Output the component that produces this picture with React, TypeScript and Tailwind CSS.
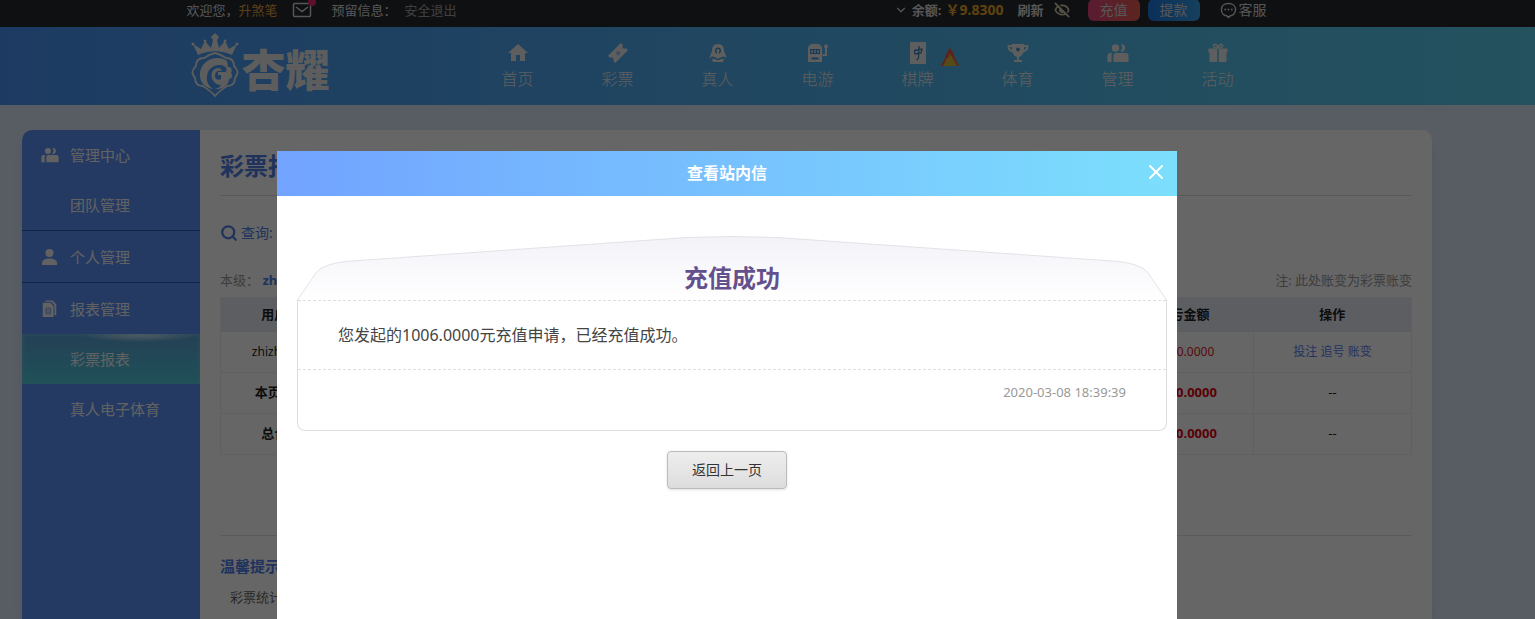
import React from 'react';
import { ChevronDown, EyeOff, Search, X } from 'lucide-react';
import { MdHome } from 'react-icons/md';

type IconProps = { className?: string };

function TicketIcon({ className }: IconProps) {
  return (
    <svg viewBox="0 0 20 20" className={className}>
      <g transform="rotate(-45 10 10)">
        <path fill="currentColor" d="M1 5h18v3a2 2 0 0 0 0 4v3H1v-3a2 2 0 0 0 0-4z" />
        <path d="m10 7 1 2 2 .3-1.500 1.400.4 2.100-1.900-1-1.900 1 .4-2.100L7 9.300l2-.3z" fill="#a8c4e8" />
      </g>
    </svg>
  );
}

function DealerIcon({ className }: IconProps) {
  return (
    <svg viewBox="0 0 20 20" className={className}>
      <path fill="currentColor" d="M10 1C5.500 1 4 4 4 7.500 4 10 1.500 12 1.500 15l3.500-1.500L10 16l5-2.500 3.500 1.500c0-3-2.500-5-2.500-7.500C16 4 14.500 1 10 1z" />
      <path fill="#4290d0" d="M10 4.500c2 0 3 1.300 3 3.200S11.800 11 10 11 7 9.600 7 7.700s1-3.200 3-3.200z" />
      <path fill="currentColor" d="M10 6a1.700 1.700 0 0 1 1 3V12H9V9a1.700 1.700 0 0 1 1-3zM4.500 15l5.500 2 5.500-2v4h-11z" />
      <path d="m3.500 14 6.500 2.500 6.500-2.500" fill="none" stroke="#4290d0" />
    </svg>
  );
}

function SlotIcon({ className }: IconProps) {
  return (
    <svg viewBox="0 0 22 20" className={className}>
      <path fill="currentColor" d="M1 6c0-3 2-5 5-5h4c3 0 5 2 5 5v13H1z" />
      <path fill="#4290d0" d="M3 6h10v5H3zM4.500 14.500h7v2h-7z" />
      <path d="M5 7v3M8 7v3M11 7v3" stroke="currentColor" strokeWidth="1.500" />
      <path d="M15.500 12H19V4" fill="none" stroke="currentColor" strokeWidth="2" />
      <circle cx="19" cy="3.500" r="2" fill="currentColor" />
    </svg>
  );
}

function MahjongIcon({ className }: IconProps) {
  return (
    <svg viewBox="0 0 20 22" className={className}>
      <path fill="currentColor" d="M2 0h16v22H2z" />
      <path d="M6.500 8.500 14 7l-1 4-6 1zM11 4l-.5 12-2 2" fill="none" stroke="#3f83b8" strokeWidth="1.300" />
    </svg>
  );
}

function FlameIcon({ className }: IconProps) {
  return (
    <svg viewBox="0 0 20 20" className={className}>
      <path fill="#e8583c" d="M10 0c1 4 4 5 4 9 2 2 2 6 5 10H1c1-4 4-5 4-10 2-2 3-5 5-9z" />
      <path fill="#d8b840" d="M10 6c0 3 3 3 3 6 2 1 2 4 4 7H3c1-3 3-4 3-7 2 0 3-3 4-6z" />
    </svg>
  );
}

function TrophyIcon({ className }: IconProps) {
  return (
    <svg viewBox="0 0 22 20" className={className}>
      <path fill="currentColor" d="M5 1h12v4c0 5-2 8-5 9v3h3v2H7v-2h3v-3c-3-1-5-4-5-9z" />
      <path d="M5 3H1.500c0 3 1.500 5 5 5.500M17 3h3.500c0 3-1.500 5-5 5.500" fill="none" stroke="currentColor" strokeWidth="2" />
      <circle cx="11" cy="6.500" r="2" fill="#429bd0" />
    </svg>
  );
}

function UsersIcon({ className }: IconProps) {
  return (
    <svg viewBox="0 0 22 20" className={className}>
      <g fill="currentColor">
        <circle cx="8.500" cy="5" r="3.700" />
        <path d="M14 1.300a3.700 3.700 0 1 1-.6 7.200 5.500 5.500 0 0 0 .6-7.200z" />
        <path d="M6.500 19v-6.500c0-1.500 1-2.500 2.500-2.500h10c1.500 0 2.500 1 2.500 2.500V19zM.5 19v-6c0-1.800.8-2.800 3-3h1.700c-.5.700-.7 1.300-.7 2.300V19z" />
      </g>
    </svg>
  );
}

function PersonIcon({ className }: IconProps) {
  return (
    <svg viewBox="0 0 18 18" className={className}>
      <circle cx="8.500" cy="5" r="4" fill="currentColor" />
      <path d="M1 17v-2c0-2.500 3-4.500 7.500-4.500S16 12.500 16 15v2z" fill="currentColor" />
    </svg>
  );
}

function GiftIcon({ className }: IconProps) {
  return (
    <svg viewBox="0 0 20 20" className={className}>
      <path fill="currentColor" d="M0.500 5.500h8.700v4H.5zM10.800 5.500h8.700v4h-8.700zM1.500 9h7.700v10H1.500zM10.800 9h7.700v10h-7.700z" />
      <path d="M10 5C7 5 5 4 5.500 2.500 6.500 0 9.500 2 10 5c.5-3 3.500-5 4.500-2.500C15 4 13 5 10 5z" fill="none" stroke="currentColor" strokeWidth="1.500" />
    </svg>
  );
}

function ReportIcon({ className }: IconProps) {
  return (
    <svg viewBox="0 0 18 20" className={className}>
      <path fill="currentColor" d="M4 .5h8l4 4.500V17h-2V6L10.500 2H4z" />
      <path fill="currentColor" d="M1 3h8.500l3.500 4v12H1z" />
      <path d="M4.500 9h5v6.500h-5zM4.500 11h5M4.500 13.500h5" fill="none" stroke="#7ea4ee" />
    </svg>
  );
}

function ChatIcon({ className }: IconProps) {
  return (
    <svg viewBox="0 0 18 18" className={className}>
      <path d="M9 1.500c4.500 0 7.500 2.800 7.500 6.500S13.500 14.500 11 14.500L9 16.500l-2-2C4 14.500 1.500 12 1.500 8S4.500 1.500 9 1.500z" fill="none" stroke="currentColor" strokeWidth="1.500" />
      <circle cx="5.500" cy="8" r="1" fill="currentColor" />
      <circle cx="9" cy="8" r="1" fill="currentColor" />
      <circle cx="12.500" cy="8" r="1" fill="currentColor" />
    </svg>
  );
}

function MailIcon({ className }: IconProps) {
  return (
    <svg viewBox="0 0 20 16" className={className}>
      <path d="M2.500 1.500h15a1 1 0 0 1 1 1v11a1 1 0 0 1-1 1h-15a1 1 0 0 1-1-1v-11a1 1 0 0 1 1-1zM4 5l6 4.500L16 5" fill="none" stroke="currentColor" strokeWidth="1.500" />
    </svg>
  );
}

function Emblem({ className }: IconProps) {
  return (
    <svg viewBox="0 0 50 66" className={className}>
      <path fill="currentColor" d="M3 11l8 5 4-8 6 7 2-8-2-3 4-4 4 4-2 3 2 8 6-7 4 8 8-5-5 11c-11-5-23-5-34 0z" />
      <circle cx="3" cy="11" r="1.500" fill="currentColor" />
      <circle cx="47" cy="11" r="1.500" fill="currentColor" />
      <circle cx="15" cy="8" r="1.500" fill="currentColor" />
      <circle cx="35" cy="8" r="1.500" fill="currentColor" />
      <path d="M25 20c5 1 8 3 11 5 6 0 8 3 8 8 4 4 5 7 1 12 0 5-3 8-8 8-4 3-8 5-12 10-4-5-8-7-12-10-5 0-8-3-8-8-4-5-3-8 1-12 0-5 2-8 8-8 3-2 6-4 11-5z" fill="none" stroke="currentColor" strokeWidth="1.800" />
      <path fill="currentColor" d="M36 27C23 21 11 29 10 40c-1 9 5 15 13 16-4-3-7-7-6-13 1-7 6-11 12-11 4 0 6 1 8 4 1-4 1-7-1-9z" />
      <path fill="currentColor" d="M22 39c3-5 9-5 10-1-5-1-7 1-7 5 0 3 3 5 6 3v-4h-3v-3h8c4 1 5 5 3 8-2 7-8 10-14 9 3-1 5-2 6-4-6 0-11-6-9-13z" />
      <path fill="currentColor" d="M37 34c4-1 6 3 4 6 2 2 1 6-2 6-2-2-4-8-2-12z" />
    </svg>
  );
}

const navItems = [
  { label: '首页', Icon: MdHome, size: 'h-6 w-6' },
  { label: '彩票', Icon: TicketIcon, size: 'h-5 w-5' },
  { label: '真人', Icon: DealerIcon, size: 'h-5 w-5' },
  { label: '电游', Icon: SlotIcon, size: 'h-5 w-[22px]' },
  { label: '棋牌', Icon: MahjongIcon, size: 'h-[22px] w-5', hot: true },
  { label: '体育', Icon: TrophyIcon, size: 'h-5 w-[22px]' },
  { label: '管理', Icon: UsersIcon, size: 'h-5 w-[22px]' },
  { label: '活动', Icon: GiftIcon, size: 'h-5 w-5' },
];

const sideGroups = [
  { label: '管理中心', Icon: UsersIcon, children: ['团队管理'] },
  { label: '个人管理', Icon: PersonIcon, children: [] },
  { label: '报表管理', Icon: ReportIcon, children: ['彩票报表', '真人电子体育'] },
];

const summaryRows = ['本页合计', '总合计'];

function TopBar() {
  return (
    <div className="h-[27px] bg-[#26282f] text-[13px] leading-5 text-[#d8d8d8]">
      <div className="mx-auto flex h-5 max-w-[1162px] items-center">
        <span>欢迎您，</span>
        <a href="#" className="text-[#e0a040]">升煞笔</a>
        <a href="#" aria-label="站内信" className="relative ml-[14px]">
          <MailIcon className="h-4 w-5" />
          <span className="absolute -top-1 -right-1 h-2 w-2 rounded-full bg-[#e8286e]" />
        </a>
        <span className="ml-5">预留信息：</span>
        <a href="#" className="ml-2 text-[#a0a0a0]">安全退出</a>
        <div className="ml-auto flex items-center pr-[82px]">
          <ChevronDown className="h-[14px] w-[14px]" />
          <span className="ml-1 font-bold">余额:</span>
          <span className="ml-1 text-sm leading-5 font-bold text-[#e8a828]">￥9.8300</span>
          <button type="button" className="ml-[14px] font-bold">刷新</button>
          <EyeOff className="ml-[10px] h-4 w-4 text-[#d8d0b0]" strokeWidth={2.5} />
          <button type="button" className="ml-[18px] h-[22px] w-[52px] rounded-md bg-linear-to-r from-[#e0457b] to-[#e85c50] text-sm leading-[22px]">充值</button>
          <button type="button" className="ml-2 h-[22px] w-[52px] rounded-md bg-linear-to-r from-[#1e78e0] to-[#38a0e8] text-sm leading-[22px]">提款</button>
          <a href="#" className="ml-5 flex items-center gap-[2px] text-sm leading-[22px]">
            <ChatIcon className="h-[17px] w-[17px]" />
            客服
          </a>
        </div>
      </div>
    </div>
  );
}

function NavBar() {
  return (
    <header className="h-[78px] bg-linear-to-r from-[#4a94f4] to-[#5acdec]">
      <div className="mx-auto flex h-full max-w-[1160px] items-center">
        <a href="#" aria-label="杏耀" className="flex w-[280px] items-center text-[#e8e8e8]">
          <Emblem className="h-[66px] w-[54px]" />
          <span className="mt-2 text-[44px] leading-[48px] font-black">杏耀</span>
        </a>
        <nav className="flex">
          {navItems.map(({ label, Icon, size, hot }) => (
            <a key={label} href="#" className="relative flex w-[100px] flex-col items-center text-[#ececec]">
              <span className="flex h-6 items-center">
                <Icon className={size} />
              </span>
              <span className="mt-[2px] text-base leading-6 font-light">{label}</span>
              {hot && <FlameIcon className="absolute top-[6px] right-2 h-5 w-5" />}
            </a>
          ))}
        </nav>
      </div>
    </header>
  );
}

function Sidebar() {
  return (
    <aside className="w-[178px] shrink-0 bg-[#5c91f7] text-[15px] leading-[50px] text-[#f4f4f4]">
      {sideGroups.map(({ label, Icon, children }) => (
        <div key={label} className="mb-px border-b border-[#3058b0] last:mb-0 last:border-b-0">
          <a href="#" className="flex items-center pl-[19px]">
            <Icon className="h-[18px] w-[18px]" />
            <span className="ml-[11px]">{label}</span>
          </a>
          {children.map(child => (
            <a
              key={child}
              href="#"
              className={`block pl-12 ${
                child === '彩票报表'
                  ? 'bg-[radial-gradient(ellipse_60px_8px_at_66%_0,#e8f4ff,transparent),linear-gradient(#5aa0d4,#4fcadc)] shadow-[inset_0_0_5px_#70c8e8]'
                  : ''
              }`}
            >
              {child}
            </a>
          ))}
        </div>
      ))}
    </aside>
  );
}

function ReportTable() {
  return (
    <table className="w-full table-fixed border border-[#eeeff3] text-center text-[13px] text-[#222]">
      <colgroup>
        <col className="w-[120px]" />
        <col />
        <col className="w-[140px]" />
        <col className="w-[158px]" />
      </colgroup>
      <thead>
        <tr className="h-[34px] bg-[#e6ebf5] font-bold">
          <th>用户名</th>
          <th />
          <th>盈亏金额</th>
          <th>操作</th>
        </tr>
      </thead>
      <tbody>
        <tr className="h-[41px] border-b border-[#eeeff3] text-xs">
          <td>zhizhun12</td>
          <td />
          <td className="text-[#e01818]">-1600.0000</td>
          <td className="border-l border-[#eeeff3] text-[#5c80f0]">
            <a href="#">投注</a> <a href="#">追号</a> <a href="#">账变</a>
          </td>
        </tr>
        {summaryRows.map(row => (
          <tr key={row} className="h-[41px] border-b border-[#eeeff3] font-bold">
            <td>{row}</td>
            <td />
            <td className="text-[#e00010]">-1600.0000</td>
            <td className="border-l border-[#eeeff3] font-normal">--</td>
          </tr>
        ))}
      </tbody>
    </table>
  );
}

function ReportPage() {
  return (
    <main className="min-w-0 flex-1 px-5">
      <h1 className="border-b border-[#e2e2e2] pt-[18px] pb-[11px] text-2xl leading-9 font-bold text-[#5180e8]">彩票报表</h1>
      <div className="mt-[27px] flex items-center text-sm leading-5 text-[#5180e8]">
        <Search className="h-[18px] w-[18px]" strokeWidth={3} />
        <span className="ml-[3px]">查询:</span>
      </div>
      <div className="mt-[27px] mb-[7px] flex justify-between text-[13px] leading-5 text-[#999]">
        <p>
          本级： <a href="#" className="font-bold text-[#5180e8]">zhizhun</a>
        </p>
        <p>注: 此处账变为彩票账变</p>
      </div>
      <ReportTable />
      <section className="mt-20 border-t border-[#e2e2e2] pt-[19px]">
        <h2 className="text-[15px] leading-[22px] font-bold text-[#5180e8]">温馨提示</h2>
        <p className="mt-[9px] pl-[10px] text-[13px] leading-[22px] text-[#666]">彩票统计</p>
      </section>
    </main>
  );
}

function MessageModal() {
  return (
    <div className="fixed inset-0 flex justify-center bg-black/60 pt-[151px] pr-[81px]">
      <div role="dialog" aria-modal="true" aria-labelledby="modal-title" className="w-[900px] bg-white">
        <div className="relative bg-linear-to-r from-[#72a3ff] to-[#7cdffc] text-center">
          <h2 id="modal-title" className="text-base leading-[45px] font-bold text-white">查看站内信</h2>
          <button type="button" aria-label="关闭" className="absolute top-[9px] right-[9px] text-white">
            <X className="h-6 w-6" />
          </button>
        </div>
        <div className="pt-10 pr-[10px] pl-5">
          <div className="relative">
            <svg viewBox="0 0 870 64" preserveAspectRatio="none" className="block h-16 w-full">
              <defs>
                <linearGradient id="arch" x1="0" y1="0" x2="0" y2="1">
                  <stop offset="0" stopColor="#f3f2f8" />
                  <stop offset="1" stopColor="#ffffff" />
                </linearGradient>
              </defs>
              <path d="M.5 64 19 37C24 30 38 26 55 25L390 1.500Q435-.5 480 1.500L815 25C832 26 846 30 851 37L869.500 64" fill="url(#arch)" stroke="#e2e2e8" />
            </svg>
            <h3 className="absolute inset-x-0 top-6 text-center text-2xl leading-9 font-bold text-[#64508c]">充值成功</h3>
          </div>
          <div className="rounded-b-lg border-x border-b border-[#dedee2]">
            <p className="border-y border-dashed border-[#dedee2] px-10 py-[22px] text-base leading-6 text-[#444]">
              您发起的1006.0000元充值申请，已经充值成功。
            </p>
            <p className="px-10 pt-3 pb-7 text-right text-[13px] leading-5 text-[#999]">2020-03-08 18:39:39</p>
          </div>
        </div>
        <div className="mt-5 text-center">
          <button type="button" className="h-[38px] w-[120px] rounded border border-[#bbb] bg-linear-to-b from-[#eee] to-[#ddd] text-sm text-[#333] shadow-sm">
            返回上一页
          </button>
        </div>
      </div>
    </div>
  );
}

export default function App() {
  return (
    <div className="flex h-screen flex-col overflow-hidden bg-[#dce8fa] font-['Noto_Sans','Noto_Sans_CJK_SC',sans-serif]">
      <TopBar />
      <NavBar />
      <div className="flex min-h-0 flex-1 pt-[25px] pr-[103px] pl-[22px]">
        <div className="flex flex-1 overflow-hidden rounded-t-[10px] bg-white shadow-lg">
          <Sidebar />
          <ReportPage />
        </div>
      </div>
      <MessageModal />
    </div>
  );
}
